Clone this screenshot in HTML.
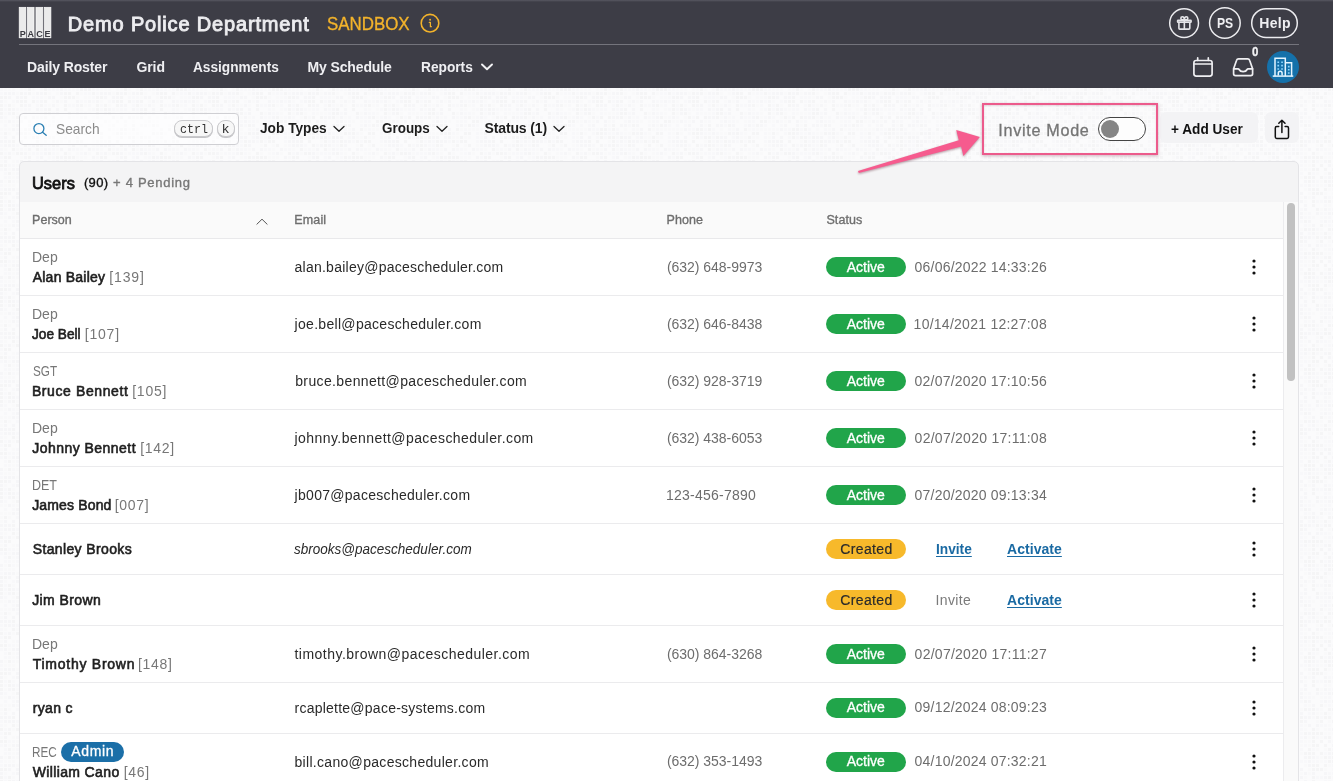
<!DOCTYPE html>
<html lang="en"><head><meta charset="utf-8"><title>Users - Demo Police Department</title>
<style>
html,body{margin:0;padding:0}
body{width:1333px;height:781px;overflow:hidden;position:relative;background:#fbfbfc;font-family:"Liberation Sans",sans-serif;}
.t{position:absolute;white-space:pre;line-height:1;margin:0;padding:0}
.abs{position:absolute}
#hdr{left:0;top:0;width:1333px;height:88px;background:#3d3d46}
#hline{left:19px;top:44px;width:1280px;height:1px;background:#74747c}
.circ{border:1.6px solid #f0f0f2;border-radius:50%;box-sizing:border-box}
#search{left:19px;top:113px;width:220px;height:31.5px;box-sizing:border-box;border:1px solid #cfcfd3;border-radius:4px;background:rgba(255,255,255,.55)}
.kbd{box-sizing:border-box;border:1px solid #c9c9cc;border-radius:8px;background:#f7f7f7;box-shadow:0 1px 0 #c4c4c7}
#card{left:19px;top:161px;width:1280px;height:640px;box-sizing:border-box;border:1px solid #e4e4e7;border-radius:5px 5px 0 0;background:#f4f4f5;overflow:hidden}
#thead{left:19.5px;top:202px;width:1263.5px;height:36.5px;background:#fafafa;border-bottom:1px solid #e9e9eb;box-sizing:border-box}
#tbody{left:19.5px;top:238.5px;width:1263.5px;height:560px;background:#fff}
#sbar{left:1283px;top:202px;width:15px;height:600px;background:#fafafa;border-left:1px solid #ececee;box-sizing:border-box}
#thumb{left:1287px;top:203px;width:8px;height:178px;border-radius:4px;background:#c1c1c1}
.rb{left:19.5px;width:1263.5px;height:1px;background:#ebebed}
.badge{height:20px;border-radius:10px}
.act{background:#21a54a}
.cre{background:#f7b92b}
.adm{background:#1b6fa8}
.btn{background:#f3f3f5;border-radius:6px}
#pink{left:982px;top:102.5px;width:176px;height:52.5px;box-sizing:border-box;border:2.5px solid #ec5b8c;box-shadow:0 1px 3px rgba(120,40,70,.35), inset 0 1px 2px rgba(120,40,70,.18)}
.lnk{text-decoration:underline;text-decoration-thickness:1.1px;text-underline-offset:1.6px}
#root{position:absolute;left:0;top:0;width:1333px;height:781px;overflow:hidden;will-change:transform}
</style></head><body><div id="root">
<svg width="0" height="0" style="position:absolute"><defs><pattern id="tex" width="96" height="96" patternUnits="userSpaceOnUse"><path fill="#1a1a2a" fill-opacity="0.007" d="M4 0h3v3h-3zM8 0h3v3h-3zM12 0h3v3h-3zM20 0h3v3h-3zM24 0h3v3h-3zM32 0h3v3h-3zM40 0h3v3h-3zM72 0h3v3h-3zM16 4h3v3h-3zM32 4h3v3h-3zM48 4h3v3h-3zM56 4h3v3h-3zM80 4h3v3h-3zM44 8h3v3h-3zM60 8h3v3h-3zM76 8h3v3h-3zM84 8h3v3h-3zM88 8h3v3h-3zM4 12h3v3h-3zM52 12h3v3h-3zM60 12h3v3h-3zM12 16h3v3h-3zM48 16h3v3h-3zM56 16h3v3h-3zM84 16h3v3h-3zM20 20h3v3h-3zM80 20h3v3h-3zM88 20h3v3h-3zM4 24h3v3h-3zM16 24h3v3h-3zM28 24h3v3h-3zM32 24h3v3h-3zM36 24h3v3h-3zM72 24h3v3h-3zM88 24h3v3h-3zM12 28h3v3h-3zM48 28h3v3h-3zM56 28h3v3h-3zM88 28h3v3h-3zM0 32h3v3h-3zM4 32h3v3h-3zM16 32h3v3h-3zM32 32h3v3h-3zM64 32h3v3h-3zM72 32h3v3h-3zM32 36h3v3h-3zM0 40h3v3h-3zM4 40h3v3h-3zM8 40h3v3h-3zM48 40h3v3h-3zM60 40h3v3h-3zM76 40h3v3h-3zM84 40h3v3h-3zM88 40h3v3h-3zM92 40h3v3h-3zM0 44h3v3h-3zM8 44h3v3h-3zM48 44h3v3h-3zM52 44h3v3h-3zM72 44h3v3h-3zM0 48h3v3h-3zM68 48h3v3h-3zM72 48h3v3h-3zM80 48h3v3h-3zM84 48h3v3h-3zM32 52h3v3h-3zM68 56h3v3h-3zM80 56h3v3h-3zM92 56h3v3h-3zM4 60h3v3h-3zM16 60h3v3h-3zM24 60h3v3h-3zM40 60h3v3h-3zM56 60h3v3h-3zM80 60h3v3h-3zM12 64h3v3h-3zM28 64h3v3h-3zM56 64h3v3h-3zM68 64h3v3h-3zM76 64h3v3h-3zM88 64h3v3h-3zM20 68h3v3h-3zM48 68h3v3h-3zM76 68h3v3h-3zM80 68h3v3h-3zM84 68h3v3h-3zM0 72h3v3h-3zM12 72h3v3h-3zM60 72h3v3h-3zM72 72h3v3h-3zM92 72h3v3h-3zM16 76h3v3h-3zM56 76h3v3h-3zM60 76h3v3h-3zM84 76h3v3h-3zM8 80h3v3h-3zM20 80h3v3h-3zM44 80h3v3h-3zM52 80h3v3h-3zM60 80h3v3h-3zM88 80h3v3h-3zM12 84h3v3h-3zM20 84h3v3h-3zM32 84h3v3h-3zM68 84h3v3h-3zM76 84h3v3h-3zM12 88h3v3h-3zM20 88h3v3h-3zM52 88h3v3h-3zM88 88h3v3h-3zM4 92h3v3h-3zM16 92h3v3h-3zM24 92h3v3h-3zM72 92h3v3h-3zM92 92h3v3h-3z"/><path fill="#1a1a2a" fill-opacity="0.013" d="M0 0h3v3h-3zM48 0h3v3h-3zM52 0h3v3h-3zM56 0h3v3h-3zM64 0h3v3h-3zM68 0h3v3h-3zM76 0h3v3h-3zM92 0h3v3h-3zM0 4h3v3h-3zM84 4h3v3h-3zM88 4h3v3h-3zM32 8h3v3h-3zM36 8h3v3h-3zM40 8h3v3h-3zM92 8h3v3h-3zM12 12h3v3h-3zM36 12h3v3h-3zM80 12h3v3h-3zM84 12h3v3h-3zM92 12h3v3h-3zM4 16h3v3h-3zM36 16h3v3h-3zM44 16h3v3h-3zM68 16h3v3h-3zM72 16h3v3h-3zM88 16h3v3h-3zM4 20h3v3h-3zM16 20h3v3h-3zM24 20h3v3h-3zM28 20h3v3h-3zM40 20h3v3h-3zM76 20h3v3h-3zM92 20h3v3h-3zM24 24h3v3h-3zM40 24h3v3h-3zM52 24h3v3h-3zM80 24h3v3h-3zM84 24h3v3h-3zM4 28h3v3h-3zM20 28h3v3h-3zM60 28h3v3h-3zM72 28h3v3h-3zM76 28h3v3h-3zM92 28h3v3h-3zM12 32h3v3h-3zM36 32h3v3h-3zM48 32h3v3h-3zM56 32h3v3h-3zM60 32h3v3h-3zM76 32h3v3h-3zM80 32h3v3h-3zM4 36h3v3h-3zM12 36h3v3h-3zM52 36h3v3h-3zM72 36h3v3h-3zM80 36h3v3h-3zM92 36h3v3h-3zM16 40h3v3h-3zM20 40h3v3h-3zM32 40h3v3h-3zM40 40h3v3h-3zM56 40h3v3h-3zM80 40h3v3h-3zM16 44h3v3h-3zM32 44h3v3h-3zM36 44h3v3h-3zM44 44h3v3h-3zM68 44h3v3h-3zM92 44h3v3h-3zM20 48h3v3h-3zM28 48h3v3h-3zM40 48h3v3h-3zM60 48h3v3h-3zM92 48h3v3h-3zM40 52h3v3h-3zM48 52h3v3h-3zM64 52h3v3h-3zM72 52h3v3h-3zM92 52h3v3h-3zM0 56h3v3h-3zM16 56h3v3h-3zM28 56h3v3h-3zM44 56h3v3h-3zM48 56h3v3h-3zM0 60h3v3h-3zM20 60h3v3h-3zM48 60h3v3h-3zM52 60h3v3h-3zM72 60h3v3h-3zM76 60h3v3h-3zM92 60h3v3h-3zM4 64h3v3h-3zM32 64h3v3h-3zM36 64h3v3h-3zM40 64h3v3h-3zM52 64h3v3h-3zM80 64h3v3h-3zM0 68h3v3h-3zM36 68h3v3h-3zM52 68h3v3h-3zM16 72h3v3h-3zM36 72h3v3h-3zM52 72h3v3h-3zM68 72h3v3h-3zM8 76h3v3h-3zM12 76h3v3h-3zM32 76h3v3h-3zM36 76h3v3h-3zM40 76h3v3h-3zM48 76h3v3h-3zM52 76h3v3h-3zM88 76h3v3h-3zM0 80h3v3h-3zM28 80h3v3h-3zM56 80h3v3h-3zM4 84h3v3h-3zM16 84h3v3h-3zM28 84h3v3h-3zM44 84h3v3h-3zM52 84h3v3h-3zM64 84h3v3h-3zM84 84h3v3h-3zM88 84h3v3h-3zM92 84h3v3h-3zM4 88h3v3h-3zM8 88h3v3h-3zM16 88h3v3h-3zM76 88h3v3h-3zM92 88h3v3h-3zM12 92h3v3h-3zM32 92h3v3h-3zM36 92h3v3h-3zM68 92h3v3h-3z"/><path fill="#1a1a2a" fill-opacity="0.019" d="M60 0h3v3h-3zM4 4h3v3h-3zM8 4h3v3h-3zM12 4h3v3h-3zM24 4h3v3h-3zM36 4h3v3h-3zM40 4h3v3h-3zM60 4h3v3h-3zM8 8h3v3h-3zM16 8h3v3h-3zM20 8h3v3h-3zM48 8h3v3h-3zM52 8h3v3h-3zM0 12h3v3h-3zM16 12h3v3h-3zM40 12h3v3h-3zM56 12h3v3h-3zM64 12h3v3h-3zM76 12h3v3h-3zM88 12h3v3h-3zM24 16h3v3h-3zM28 16h3v3h-3zM52 16h3v3h-3zM76 16h3v3h-3zM12 20h3v3h-3zM36 20h3v3h-3zM44 20h3v3h-3zM56 20h3v3h-3zM8 24h3v3h-3zM56 24h3v3h-3zM76 24h3v3h-3zM0 28h3v3h-3zM36 28h3v3h-3zM40 28h3v3h-3zM52 28h3v3h-3zM68 28h3v3h-3zM80 28h3v3h-3zM8 32h3v3h-3zM20 32h3v3h-3zM28 32h3v3h-3zM52 32h3v3h-3zM16 36h3v3h-3zM28 36h3v3h-3zM44 36h3v3h-3zM48 36h3v3h-3zM60 36h3v3h-3zM76 36h3v3h-3zM88 36h3v3h-3zM12 40h3v3h-3zM64 40h3v3h-3zM28 44h3v3h-3zM40 44h3v3h-3zM60 44h3v3h-3zM4 48h3v3h-3zM12 48h3v3h-3zM48 48h3v3h-3zM52 48h3v3h-3zM64 48h3v3h-3zM0 52h3v3h-3zM4 52h3v3h-3zM8 52h3v3h-3zM44 52h3v3h-3zM56 52h3v3h-3zM60 52h3v3h-3zM4 56h3v3h-3zM8 56h3v3h-3zM12 56h3v3h-3zM32 56h3v3h-3zM40 56h3v3h-3zM56 56h3v3h-3zM28 60h3v3h-3zM44 60h3v3h-3zM60 60h3v3h-3zM68 60h3v3h-3zM88 60h3v3h-3zM8 64h3v3h-3zM24 64h3v3h-3zM44 64h3v3h-3zM84 64h3v3h-3zM24 68h3v3h-3zM40 68h3v3h-3zM60 68h3v3h-3zM92 68h3v3h-3zM4 72h3v3h-3zM28 72h3v3h-3zM44 72h3v3h-3zM56 72h3v3h-3zM76 72h3v3h-3zM20 76h3v3h-3zM24 76h3v3h-3zM28 76h3v3h-3zM80 76h3v3h-3zM4 80h3v3h-3zM12 80h3v3h-3zM16 80h3v3h-3zM24 80h3v3h-3zM32 80h3v3h-3zM36 80h3v3h-3zM40 80h3v3h-3zM84 80h3v3h-3zM24 84h3v3h-3zM40 84h3v3h-3zM48 84h3v3h-3zM24 88h3v3h-3zM32 88h3v3h-3zM36 88h3v3h-3zM44 88h3v3h-3zM80 88h3v3h-3zM0 92h3v3h-3zM40 92h3v3h-3zM44 92h3v3h-3zM48 92h3v3h-3zM56 92h3v3h-3zM64 92h3v3h-3zM80 92h3v3h-3zM88 92h3v3h-3z"/><path fill="#1a1a2a" fill-opacity="0.026" d="M28 0h3v3h-3zM44 0h3v3h-3zM80 0h3v3h-3zM84 0h3v3h-3zM88 0h3v3h-3zM20 4h3v3h-3zM28 4h3v3h-3zM44 4h3v3h-3zM64 4h3v3h-3zM68 4h3v3h-3zM76 4h3v3h-3zM92 4h3v3h-3zM0 8h3v3h-3zM4 8h3v3h-3zM24 8h3v3h-3zM64 8h3v3h-3zM68 8h3v3h-3zM72 8h3v3h-3zM20 12h3v3h-3zM24 12h3v3h-3zM32 12h3v3h-3zM44 12h3v3h-3zM0 16h3v3h-3zM8 16h3v3h-3zM20 16h3v3h-3zM40 16h3v3h-3zM64 16h3v3h-3zM80 16h3v3h-3zM0 20h3v3h-3zM8 20h3v3h-3zM48 20h3v3h-3zM64 20h3v3h-3zM0 24h3v3h-3zM12 24h3v3h-3zM44 24h3v3h-3zM48 24h3v3h-3zM68 24h3v3h-3zM16 28h3v3h-3zM24 28h3v3h-3zM32 28h3v3h-3zM44 28h3v3h-3zM84 28h3v3h-3zM88 32h3v3h-3zM92 32h3v3h-3zM36 36h3v3h-3zM56 36h3v3h-3zM84 36h3v3h-3zM24 40h3v3h-3zM28 40h3v3h-3zM36 40h3v3h-3zM72 40h3v3h-3zM4 44h3v3h-3zM20 44h3v3h-3zM24 44h3v3h-3zM56 44h3v3h-3zM64 44h3v3h-3zM80 44h3v3h-3zM84 44h3v3h-3zM24 48h3v3h-3zM32 48h3v3h-3zM36 48h3v3h-3zM44 48h3v3h-3zM76 48h3v3h-3zM12 52h3v3h-3zM20 52h3v3h-3zM36 52h3v3h-3zM52 52h3v3h-3zM68 52h3v3h-3zM76 52h3v3h-3zM80 52h3v3h-3zM24 56h3v3h-3zM36 56h3v3h-3zM52 56h3v3h-3zM72 56h3v3h-3zM84 56h3v3h-3zM12 60h3v3h-3zM36 60h3v3h-3zM0 64h3v3h-3zM16 64h3v3h-3zM20 64h3v3h-3zM48 64h3v3h-3zM64 64h3v3h-3zM4 68h3v3h-3zM8 68h3v3h-3zM28 68h3v3h-3zM56 68h3v3h-3zM64 68h3v3h-3zM68 68h3v3h-3zM72 68h3v3h-3zM20 72h3v3h-3zM64 72h3v3h-3zM80 72h3v3h-3zM0 76h3v3h-3zM4 76h3v3h-3zM44 76h3v3h-3zM64 76h3v3h-3zM72 76h3v3h-3zM48 80h3v3h-3zM64 80h3v3h-3zM68 80h3v3h-3zM76 80h3v3h-3zM8 84h3v3h-3zM36 84h3v3h-3zM60 84h3v3h-3zM80 84h3v3h-3zM28 88h3v3h-3zM40 88h3v3h-3zM48 88h3v3h-3zM56 88h3v3h-3zM60 88h3v3h-3zM64 88h3v3h-3zM72 88h3v3h-3zM84 88h3v3h-3zM8 92h3v3h-3zM28 92h3v3h-3zM60 92h3v3h-3zM76 92h3v3h-3zM84 92h3v3h-3z"/></pattern></defs></svg>
<svg class="abs" style="left:0;top:88px" width="1333" height="693"><rect width="1333" height="693" fill="url(#tex)"/></svg>
<div class="abs" id="hdr"></div>
<div class="abs" id="hline"></div>
<div class="abs" style="left:0;top:0;width:1333px;height:2px;background:linear-gradient(#585862,#3d3d46)"></div>
<!-- logo -->
<svg class="abs" style="left:18px;top:6px" width="34" height="33" viewBox="18 6 34 33">
 <g fill="#ebebeb" stroke="#fdfdfd" stroke-width="0.7">
  <rect x="19.200" y="7.300" width="6.700" height="30.500"/><rect x="27.300" y="7.300" width="6.800" height="30.500"/><rect x="35.900" y="7.300" width="6.900" height="30.500"/><rect x="44.200" y="7.300" width="6.700" height="30.500"/>
 </g>
 <rect x="34.500" y="7" width="1" height="31" fill="#8d8d92"/>
 <g font-family="Liberation Sans, sans-serif" font-weight="700" font-size="9" fill="#3b3b42" text-anchor="middle">
  <text x="22.800" y="36.900">P</text><text x="30.700" y="36.900">A</text><text x="39.500" y="36.900">C</text><text x="47.500" y="36.900">E</text>
 </g>
</svg>
<!-- info icon -->
<svg class="abs" style="left:419px;top:12px" width="22" height="22" viewBox="0 0 22 22"><circle cx="11" cy="11.200" r="8.800" fill="none" stroke="#f3b32b" stroke-width="1.600"/><circle cx="11.100" cy="7.700" r="0.950" fill="#f3b32b"/><path d="M10.300 10.400h1.100v4.300h.9" fill="none" stroke="#f3b32b" stroke-width="1.250" stroke-linecap="round" stroke-linejoin="round"/></svg>
<!-- header right circles -->
<svg class="abs" style="left:1166px;top:4px" width="136" height="38" viewBox="1166 4 136 38" fill="none" stroke="#ececef" stroke-width="1.500"><circle cx="1184.100" cy="23.100" r="14.400"/><circle cx="1224.900" cy="23" r="15.300"/><rect x="1251.700" y="8.700" width="45.600" height="28.700" rx="14.350"/></svg>
<svg class="abs" style="left:1174px;top:13px" width="20" height="20" viewBox="1174 13 20 20" fill="none" stroke="#e4e4e8" stroke-width="1.600" stroke-linejoin="round" stroke-linecap="round"><rect x="1177.600" y="20.200" width="13.500" height="2.100" rx=".5" fill="#e4e4e8" fill-opacity=".55"/><path d="M1178.900 23v5.200a.9.900 0 0 0 .9.900h9.100a.9.900 0 0 0 .9-.9V23"/><path d="M1184.350 20v9"/><path d="M1184.300 19.800h-1.900a1.550 1.550 0 0 1 0-3.100c1.200 0 1.900 1.300 1.900 3.100zM1184.400 19.800h1.900a1.550 1.550 0 0 0 0-3.100c-1.200 0-1.900 1.300-1.900 3.100z"/></svg>
<!-- calendar -->
<svg class="abs" style="left:1188px;top:46px" width="114" height="40" viewBox="1188 46 114 40" fill="none" stroke="#efeff2" stroke-width="1.700" stroke-linecap="round" stroke-linejoin="round">
<rect x="1193.900" y="60.500" width="18.200" height="15.600" rx="2.300"/><path d="M1194 64h18M1197.700 57.900v2.400M1208.300 57.900v2.400"/>
<!-- inbox -->
<path d="M1233.600 68.700 1236.600 60.300a2 2 0 0 1 1.900-1.400h9.200a2 2 0 0 1 1.900 1.400l3 8.400v5a1.900 1.900 0 0 1-1.900 1.900h-15.200a1.900 1.900 0 0 1-1.900-1.900z"/><path d="M1233.700 68.800h4.300c.5 0 .9.300 1.100.7.700 1.400 2 2.100 4 2.100s3.300-.7 4-2.100c.2-.4.600-.7 1.100-.7h4.300"/>
</svg>
<!-- building -->
<div class="abs" style="left:1267px;top:51px;width:32px;height:32px;border-radius:50%;background:#1571aa"></div>
<svg class="abs" style="left:1268px;top:52px" width="30" height="30" viewBox="1268 52 30 30" fill="none" stroke="#e4f5ff" stroke-width="1.500" stroke-linejoin="miter" stroke-linecap="square"><path d="M1275 75.500V58.300h10.300v17.200"/><path d="M1285.800 62.800h5.800v12.700"/><path d="M1273.500 76.100h19"/><path d="M1278.300 75.400v-2.200a1.900 1.900 0 0 1 3.800 0v2.200" stroke-linecap="butt"/><g stroke="#8fd8ff" stroke-width="1.600"><path d="M1278.200 62.200h.1M1282 62.200h.1M1278.200 65.600h.1M1282 65.600h.1M1278.200 69h.1M1282 69h.1M1288.700 66.600h.1M1288.700 69.800h.1M1288.700 73h.1"/></g></svg>
<!-- toolbar -->
<div class="abs" id="search"></div>
<svg class="abs" style="left:32px;top:121px" width="17" height="17" viewBox="0 0 17 17" fill="none" stroke="#2b7fb3" stroke-width="1.300" stroke-linecap="round"><circle cx="6.900" cy="7.600" r="5"/><path d="M10.600 11.300 14.200 14.300"/></svg>
<div class="abs kbd" style="left:174px;top:119.800px;width:39px;height:17px"></div>
<div class="abs kbd" style="left:217px;top:119.800px;width:17.500px;height:17px"></div>
<svg class="abs" style="left:333.4px;top:125px" width="12" height="8" viewBox="0 0 12 8"><path d="M1 1.5 L6 6.3 L11 1.5" fill="none" stroke="#222" stroke-width="1.3" stroke-linecap="round" stroke-linejoin="round"/></svg><svg class="abs" style="left:436.2px;top:125px" width="12" height="8" viewBox="0 0 12 8"><path d="M1 1.5 L6 6.3 L11 1.5" fill="none" stroke="#222" stroke-width="1.3" stroke-linecap="round" stroke-linejoin="round"/></svg><svg class="abs" style="left:553.2px;top:125px" width="12" height="8" viewBox="0 0 12 8"><path d="M1 1.5 L6 6.3 L11 1.5" fill="none" stroke="#222" stroke-width="1.3" stroke-linecap="round" stroke-linejoin="round"/></svg><svg class="abs" style="left:481px;top:63.3px" width="12" height="8" viewBox="0 0 12 8"><path d="M1 1.5 L6 6.3 L11 1.5" fill="none" stroke="#f2f2f4" stroke-width="1.9" stroke-linecap="round" stroke-linejoin="round"/></svg>
<div class="abs btn" style="left:1160px;top:112px;width:98px;height:30.500px"></div>
<div class="abs btn" style="left:1265px;top:112px;width:34px;height:30.500px"></div>
<svg class="abs" style="left:1272px;top:116.500px" width="20" height="25" viewBox="0 0 20 25" fill="none" stroke="#111" stroke-width="1.500" stroke-linecap="round" stroke-linejoin="round"><path d="M6.700 9.500H4.700a1.400 1.400 0 0 0-1.400 1.400v9.200a1.400 1.400 0 0 0 1.400 1.400h10.400a1.400 1.400 0 0 0 1.400-1.400v-9.200a1.400 1.400 0 0 0-1.400-1.400h-2"/><path d="M9.900 15.400V3.300M6.800 6.300 9.900 3.200 13 6.300"/></svg>
<!-- toggle -->
<div class="abs" style="left:1098px;top:117px;width:48px;height:24px;box-sizing:border-box;border:1.300px solid #444;border-radius:12px;background:#fdfdfd"></div>
<div class="abs" style="left:1101px;top:120px;width:18px;height:18px;border-radius:50%;background:#858585"></div>
<!-- card -->
<div class="abs" id="card"></div>
<div class="abs" id="tbody"></div>
<div class="abs" id="thead"></div>
<div class="abs" id="sbar"></div>
<div class="abs" id="thumb"></div>
<svg class="abs" style="left:255px;top:217px" width="14" height="9" viewBox="0 0 14 9"><path d="M1.900 7.200 7 2.200l5.100 5" fill="none" stroke="#555" stroke-width="1" stroke-linecap="round" stroke-linejoin="round"/></svg>
<div class="abs rb" style="top:294.8px"></div><div class="abs rb" style="top:351.7px"></div><div class="abs rb" style="top:408.6px"></div><div class="abs rb" style="top:465.5px"></div><div class="abs rb" style="top:522.5px"></div><div class="abs rb" style="top:573.5px"></div><div class="abs rb" style="top:624.5px"></div><div class="abs rb" style="top:681.5px"></div><div class="abs rb" style="top:732.5px"></div><svg class="abs" style="left:1244px;top:255px" width="20" height="24" viewBox="0 0 20 24"><circle cx="10" cy="6" r="1.6" fill="#111"/><circle cx="10" cy="12" r="1.6" fill="#111"/><circle cx="10" cy="18" r="1.6" fill="#111"/></svg><svg class="abs" style="left:1244px;top:312px" width="20" height="24" viewBox="0 0 20 24"><circle cx="10" cy="6" r="1.6" fill="#111"/><circle cx="10" cy="12" r="1.6" fill="#111"/><circle cx="10" cy="18" r="1.6" fill="#111"/></svg><svg class="abs" style="left:1244px;top:369px" width="20" height="24" viewBox="0 0 20 24"><circle cx="10" cy="6" r="1.6" fill="#111"/><circle cx="10" cy="12" r="1.6" fill="#111"/><circle cx="10" cy="18" r="1.6" fill="#111"/></svg><svg class="abs" style="left:1244px;top:426px" width="20" height="24" viewBox="0 0 20 24"><circle cx="10" cy="6" r="1.6" fill="#111"/><circle cx="10" cy="12" r="1.6" fill="#111"/><circle cx="10" cy="18" r="1.6" fill="#111"/></svg><svg class="abs" style="left:1244px;top:483px" width="20" height="24" viewBox="0 0 20 24"><circle cx="10" cy="6" r="1.6" fill="#111"/><circle cx="10" cy="12" r="1.6" fill="#111"/><circle cx="10" cy="18" r="1.6" fill="#111"/></svg><svg class="abs" style="left:1244px;top:537px" width="20" height="24" viewBox="0 0 20 24"><circle cx="10" cy="6" r="1.6" fill="#111"/><circle cx="10" cy="12" r="1.6" fill="#111"/><circle cx="10" cy="18" r="1.6" fill="#111"/></svg><svg class="abs" style="left:1244px;top:588px" width="20" height="24" viewBox="0 0 20 24"><circle cx="10" cy="6" r="1.6" fill="#111"/><circle cx="10" cy="12" r="1.6" fill="#111"/><circle cx="10" cy="18" r="1.6" fill="#111"/></svg><svg class="abs" style="left:1244px;top:642px" width="20" height="24" viewBox="0 0 20 24"><circle cx="10" cy="6" r="1.6" fill="#111"/><circle cx="10" cy="12" r="1.6" fill="#111"/><circle cx="10" cy="18" r="1.6" fill="#111"/></svg><svg class="abs" style="left:1244px;top:696px" width="20" height="24" viewBox="0 0 20 24"><circle cx="10" cy="6" r="1.6" fill="#111"/><circle cx="10" cy="12" r="1.6" fill="#111"/><circle cx="10" cy="18" r="1.6" fill="#111"/></svg><svg class="abs" style="left:1244px;top:750px" width="20" height="24" viewBox="0 0 20 24"><circle cx="10" cy="6" r="1.6" fill="#111"/><circle cx="10" cy="12" r="1.6" fill="#111"/><circle cx="10" cy="18" r="1.6" fill="#111"/></svg>
<!-- badges -->
<div class="abs badge act" style="left:826px;top:257px;width:80px"></div><div class="abs badge act" style="left:826px;top:314px;width:80px"></div><div class="abs badge act" style="left:826px;top:371px;width:80px"></div><div class="abs badge act" style="left:826px;top:428px;width:80px"></div><div class="abs badge act" style="left:826px;top:485px;width:80px"></div><div class="abs badge act" style="left:826px;top:644px;width:80px"></div><div class="abs badge act" style="left:826px;top:698px;width:80px"></div><div class="abs badge act" style="left:826px;top:752px;width:80px"></div>
<div class="abs badge cre" style="left:826px;top:539px;width:80px"></div>
<div class="abs badge cre" style="left:826px;top:590px;width:80px"></div>
<div class="abs badge adm" style="left:60.500px;top:742px;width:63.500px"></div>
<!-- annotation -->
<div class="abs" id="pink"></div>
<svg class="abs" style="left:850px;top:120px;filter:drop-shadow(0 1px 1.200px rgba(90,30,50,.45))" width="140" height="60" viewBox="850 120 140 60"><path d="M858 171.100 L958.800 140.200 L956.200 130.100 L979.900 137 L963.400 156 L961.100 146.500 L858.800 173 Z" fill="#f65b8e"/></svg>
<span class="t" style="left:67.85px;top:13.90px;font-size:20px;color:#ececef;letter-spacing:0.835px;-webkit-text-stroke:.9px currentColor;">Demo Police Department</span>
<span class="t" style="left:326.66px;top:15.30px;font-size:18.6px;color:#f3b32b;transform:scaleX(0.9078);transform-origin:0 0;-webkit-text-stroke:.35px currentColor;">SANDBOX</span>
<span class="t" style="left:27.00px;top:60.00px;font-size:14px;font-weight:700;color:#efeff2;letter-spacing:-0.113px;">Daily Roster</span>
<span class="t" style="left:136.50px;top:60.00px;font-size:14px;font-weight:700;color:#efeff2;letter-spacing:-0.109px;">Grid</span>
<span class="t" style="left:193.00px;top:60.00px;font-size:14px;font-weight:700;color:#efeff2;transform:scaleX(0.9759);transform-origin:0 0;">Assignments</span>
<span class="t" style="left:307.60px;top:60.00px;font-size:14px;font-weight:700;color:#efeff2;letter-spacing:-0.139px;">My Schedule</span>
<span class="t" style="left:420.90px;top:60.00px;font-size:14px;font-weight:700;color:#efeff2;transform:scaleX(0.9791);transform-origin:0 0;">Reports</span>
<span class="t" style="left:1217.20px;top:16.00px;font-size:14px;font-weight:700;color:#efeff2;transform:scaleX(0.8671);transform-origin:0 0;">PS</span>
<span class="t" style="left:1259.30px;top:16.00px;font-size:14px;font-weight:700;color:#efeff2;letter-spacing:0.338px;">Help</span>
<span class="t" style="left:1251.84px;top:46.30px;font-size:12.5px;font-weight:700;color:#f2f2f4;transform:scaleX(0.9178);transform-origin:0 0;-webkit-text-stroke:.3px currentColor;">0</span>
<span class="t" style="left:56.20px;top:120.80px;font-size:15px;color:#8b8b8b;transform:scaleX(0.9156);transform-origin:0 0;">Search</span>
<span class="t" style="left:180.00px;top:123.00px;font-size:13.5px;color:#333;transform:scaleX(0.8668);transform-origin:0 0;font-family:'Liberation Mono',monospace;">ctrl</span>
<span class="t" style="left:221.50px;top:123.00px;font-size:13.5px;color:#333;font-family:'Liberation Mono',monospace;">k</span>
<span class="t" style="left:260.30px;top:121.00px;font-size:14px;font-weight:700;color:#1c1c1c;transform:scaleX(0.9778);transform-origin:0 0;">Job Types</span>
<span class="t" style="left:382.00px;top:121.00px;font-size:14px;font-weight:700;color:#1c1c1c;transform:scaleX(0.9601);transform-origin:0 0;">Groups</span>
<span class="t" style="left:484.50px;top:121.00px;font-size:14px;font-weight:700;color:#1c1c1c;letter-spacing:-0.136px;">Status (1)</span>
<span class="t" style="left:998.35px;top:122.00px;font-size:16.2px;color:#757575;letter-spacing:0.682px;-webkit-text-stroke:.3px currentColor;">Invite Mode</span>
<span class="t" style="left:1171.10px;top:122.00px;font-size:14.1px;font-weight:700;color:#111;transform:scaleX(0.9666);transform-origin:0 0;">+ Add User</span>
<span class="t" style="left:32.31px;top:176.00px;font-size:16.7px;color:#111;transform:scaleX(0.9830);transform-origin:0 0;-webkit-text-stroke:.8px currentColor;">Users</span>
<span class="t" style="left:83.88px;top:176.00px;font-size:13px;color:#111;letter-spacing:0.387px;-webkit-text-stroke:.35px currentColor;">(90)</span>
<span class="t" style="left:112.97px;top:176.00px;font-size:13px;color:#777;letter-spacing:0.733px;-webkit-text-stroke:.35px currentColor;">+ 4 Pending</span>
<span class="t" style="left:32.07px;top:214.00px;font-size:12.5px;color:#6e6e6e;letter-spacing:0.019px;-webkit-text-stroke:.35px currentColor;">Person</span>
<span class="t" style="left:294.18px;top:214.00px;font-size:12.5px;color:#6e6e6e;letter-spacing:0.168px;-webkit-text-stroke:.35px currentColor;">Email</span>
<span class="t" style="left:666.57px;top:214.00px;font-size:12.5px;color:#6e6e6e;letter-spacing:0.064px;-webkit-text-stroke:.35px currentColor;">Phone</span>
<span class="t" style="left:826.47px;top:214.00px;font-size:12.5px;color:#6e6e6e;letter-spacing:0.053px;-webkit-text-stroke:.35px currentColor;">Status</span>
<span class="t" style="left:31.90px;top:250.00px;font-size:14px;color:#777;letter-spacing:0.102px;">Dep</span>
<span class="t" style="left:32.70px;top:270.00px;font-size:14px;color:#1f1f1f;letter-spacing:0.236px;-webkit-text-stroke:.6px currentColor;">Alan Bailey</span>
<span class="t" style="left:109.30px;top:270.00px;font-size:14px;color:#777;letter-spacing:0.863px;">[139]</span>
<span class="t" style="left:294.50px;top:260.00px;font-size:14px;color:#2a2a2a;letter-spacing:0.249px;">alan.bailey@pacescheduler.com</span>
<span class="t" style="left:667.00px;top:259.70px;font-size:14px;color:#6d6d6d;letter-spacing:-0.042px;">(632) 648-9973</span>
<span class="t" style="left:846.75px;top:259.70px;font-size:14px;color:#fff;letter-spacing:-0.008px;-webkit-text-stroke:.3px #fff;">Active</span>
<span class="t" style="left:914.60px;top:259.70px;font-size:14px;color:#6d6d6d;letter-spacing:0.202px;">06/06/2022 14:33:26</span>
<span class="t" style="left:31.90px;top:307.00px;font-size:14px;color:#777;letter-spacing:0.102px;">Dep</span>
<span class="t" style="left:32.19px;top:327.00px;font-size:14px;color:#1f1f1f;transform:scaleX(0.9742);transform-origin:0 0;-webkit-text-stroke:.6px currentColor;">Joe Bell</span>
<span class="t" style="left:84.80px;top:327.00px;font-size:14px;color:#777;letter-spacing:0.788px;">[107]</span>
<span class="t" style="left:294.60px;top:317.00px;font-size:14px;color:#2a2a2a;letter-spacing:0.302px;">joe.bell@pacescheduler.com</span>
<span class="t" style="left:667.00px;top:316.70px;font-size:14px;color:#6d6d6d;letter-spacing:-0.042px;">(632) 646-8438</span>
<span class="t" style="left:846.75px;top:316.70px;font-size:14px;color:#fff;letter-spacing:-0.008px;-webkit-text-stroke:.3px #fff;">Active</span>
<span class="t" style="left:913.60px;top:316.70px;font-size:14px;color:#6d6d6d;letter-spacing:0.257px;">10/14/2021 12:27:08</span>
<span class="t" style="left:32.90px;top:364.00px;font-size:14px;color:#777;transform:scaleX(0.8383);transform-origin:0 0;">SGT</span>
<span class="t" style="left:31.90px;top:384.00px;font-size:14px;color:#1f1f1f;letter-spacing:0.606px;-webkit-text-stroke:.6px currentColor;">Bruce Bennett</span>
<span class="t" style="left:132.20px;top:384.00px;font-size:14px;color:#777;letter-spacing:0.788px;">[105]</span>
<span class="t" style="left:295.20px;top:374.00px;font-size:14px;color:#2a2a2a;letter-spacing:0.370px;">bruce.bennett@pacescheduler.com</span>
<span class="t" style="left:667.00px;top:373.70px;font-size:14px;color:#6d6d6d;letter-spacing:-0.042px;">(632) 928-3719</span>
<span class="t" style="left:846.75px;top:373.70px;font-size:14px;color:#fff;letter-spacing:-0.008px;-webkit-text-stroke:.3px #fff;">Active</span>
<span class="t" style="left:914.60px;top:373.70px;font-size:14px;color:#6d6d6d;letter-spacing:0.202px;">02/07/2020 17:10:56</span>
<span class="t" style="left:31.90px;top:421.00px;font-size:14px;color:#777;letter-spacing:0.102px;">Dep</span>
<span class="t" style="left:32.20px;top:441.00px;font-size:14px;color:#1f1f1f;letter-spacing:0.469px;-webkit-text-stroke:.6px currentColor;">Johnny Bennett</span>
<span class="t" style="left:140.30px;top:441.00px;font-size:14px;color:#777;letter-spacing:0.688px;">[142]</span>
<span class="t" style="left:294.60px;top:431.00px;font-size:14px;color:#2a2a2a;letter-spacing:0.420px;">johnny.bennett@pacescheduler.com</span>
<span class="t" style="left:667.00px;top:430.70px;font-size:14px;color:#6d6d6d;letter-spacing:-0.042px;">(632) 438-6053</span>
<span class="t" style="left:846.75px;top:430.70px;font-size:14px;color:#fff;letter-spacing:-0.008px;-webkit-text-stroke:.3px #fff;">Active</span>
<span class="t" style="left:914.60px;top:430.70px;font-size:14px;color:#6d6d6d;letter-spacing:0.260px;">02/07/2020 17:11:08</span>
<span class="t" style="left:32.01px;top:478.00px;font-size:14px;color:#777;transform:scaleX(0.8926);transform-origin:0 0;">DET</span>
<span class="t" style="left:32.20px;top:498.00px;font-size:14px;color:#1f1f1f;letter-spacing:0.152px;-webkit-text-stroke:.6px currentColor;">James Bond</span>
<span class="t" style="left:114.70px;top:498.00px;font-size:14px;color:#777;letter-spacing:0.688px;">[007]</span>
<span class="t" style="left:294.60px;top:488.00px;font-size:14px;color:#2a2a2a;letter-spacing:0.289px;">jb007@pacescheduler.com</span>
<span class="t" style="left:666.00px;top:487.70px;font-size:14px;color:#6d6d6d;letter-spacing:0.236px;">123-456-7890</span>
<span class="t" style="left:846.75px;top:487.70px;font-size:14px;color:#fff;letter-spacing:-0.008px;-webkit-text-stroke:.3px #fff;">Active</span>
<span class="t" style="left:914.60px;top:487.70px;font-size:14px;color:#6d6d6d;letter-spacing:0.202px;">07/20/2020 09:13:34</span>
<span class="t" style="left:31.90px;top:637.00px;font-size:14px;color:#777;letter-spacing:0.102px;">Dep</span>
<span class="t" style="left:32.70px;top:657.00px;font-size:14px;color:#1f1f1f;letter-spacing:0.746px;-webkit-text-stroke:.6px currentColor;">Timothy Brown</span>
<span class="t" style="left:138.00px;top:657.00px;font-size:14px;color:#777;letter-spacing:0.688px;">[148]</span>
<span class="t" style="left:294.50px;top:647.00px;font-size:14px;color:#2a2a2a;letter-spacing:0.474px;">timothy.brown@pacescheduler.com</span>
<span class="t" style="left:667.00px;top:646.70px;font-size:14px;color:#6d6d6d;letter-spacing:-0.042px;">(630) 864-3268</span>
<span class="t" style="left:846.75px;top:646.70px;font-size:14px;color:#fff;letter-spacing:-0.008px;-webkit-text-stroke:.3px #fff;">Active</span>
<span class="t" style="left:914.60px;top:646.70px;font-size:14px;color:#6d6d6d;letter-spacing:0.260px;">02/07/2020 17:11:27</span>
<span class="t" style="left:32.06px;top:744.50px;font-size:14px;color:#777;transform:scaleX(0.8366);transform-origin:0 0;">REC</span>
<span class="t" style="left:32.70px;top:764.50px;font-size:14px;color:#1f1f1f;letter-spacing:0.366px;-webkit-text-stroke:.6px currentColor;">William Cano</span>
<span class="t" style="left:123.70px;top:764.50px;font-size:14px;color:#777;letter-spacing:0.713px;">[46]</span>
<span class="t" style="left:294.50px;top:754.50px;font-size:14px;color:#2a2a2a;letter-spacing:0.306px;">bill.cano@pacescheduler.com</span>
<span class="t" style="left:667.00px;top:754.20px;font-size:14px;color:#6d6d6d;letter-spacing:-0.042px;">(632) 353-1493</span>
<span class="t" style="left:846.75px;top:754.20px;font-size:14px;color:#fff;letter-spacing:-0.008px;-webkit-text-stroke:.3px #fff;">Active</span>
<span class="t" style="left:914.60px;top:754.20px;font-size:14px;color:#6d6d6d;letter-spacing:0.202px;">04/10/2024 07:32:21</span>
<span class="t" style="left:32.70px;top:542.00px;font-size:14px;color:#1f1f1f;letter-spacing:0.372px;-webkit-text-stroke:.6px currentColor;">Stanley Brooks</span>
<span class="t" style="left:294.00px;top:542.00px;font-size:14px;color:#2a2a2a;font-style:italic;transform:scaleX(0.9650);transform-origin:0 0;">sbrooks@pacescheduler.com</span>
<span class="t" style="left:840.30px;top:541.80px;font-size:14px;color:#2b2b2b;letter-spacing:0.347px;-webkit-text-stroke:.2px #2b2b2b;">Created</span>
<span class="t lnk" style="left:936.00px;top:541.80px;font-size:14px;font-weight:700;color:#1a6aa3;transform:scaleX(0.9788);transform-origin:0 0;">Invite</span>
<span class="t lnk" style="left:1007.00px;top:541.80px;font-size:14px;font-weight:700;color:#1a6aa3;letter-spacing:0.045px;">Activate</span>
<span class="t" style="left:32.20px;top:593.00px;font-size:14px;color:#1f1f1f;letter-spacing:0.393px;-webkit-text-stroke:.6px currentColor;">Jim Brown</span>
<span class="t" style="left:840.30px;top:592.90px;font-size:14px;color:#2b2b2b;letter-spacing:0.347px;-webkit-text-stroke:.2px #2b2b2b;">Created</span>
<span class="t" style="left:935.60px;top:592.90px;font-size:14px;color:#7a7a7a;letter-spacing:0.365px;">Invite</span>
<span class="t lnk" style="left:1007.00px;top:592.90px;font-size:14px;font-weight:700;color:#1a6aa3;letter-spacing:0.045px;">Activate</span>
<span class="t" style="left:32.70px;top:700.50px;font-size:14px;color:#1f1f1f;letter-spacing:0.355px;-webkit-text-stroke:.6px currentColor;">ryan c</span>
<span class="t" style="left:294.50px;top:700.50px;font-size:14px;color:#2a2a2a;letter-spacing:0.242px;">rcaplette@pace-systems.com</span>
<span class="t" style="left:846.75px;top:700.20px;font-size:14px;color:#fff;letter-spacing:-0.008px;-webkit-text-stroke:.3px #fff;">Active</span>
<span class="t" style="left:914.60px;top:700.20px;font-size:14px;color:#6d6d6d;letter-spacing:0.202px;">09/12/2024 08:09:23</span>
<span class="t" style="left:71.15px;top:744.40px;font-size:14px;color:#fff;letter-spacing:0.701px;-webkit-text-stroke:.3px #fff;">Admin</span>
</div></body></html>
